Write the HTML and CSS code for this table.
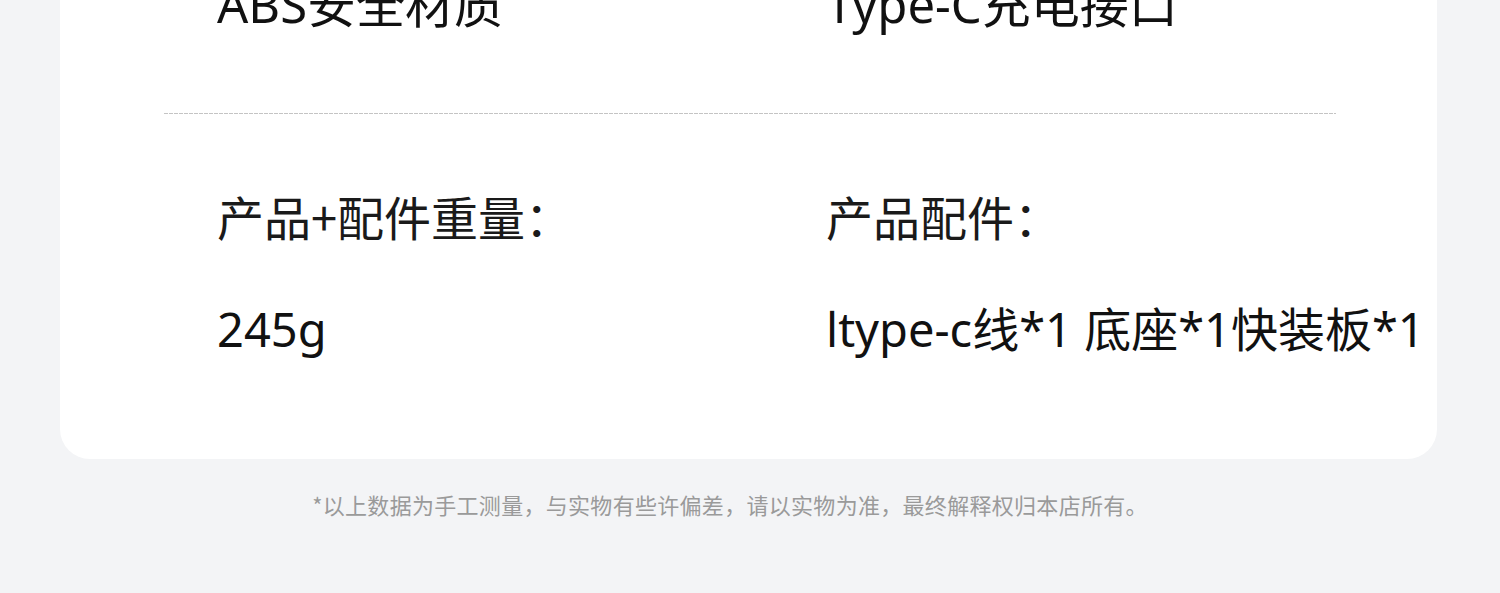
FILE: index.html
```html
<!doctype html>
<html lang="zh-CN">
  <head>
    <meta charset="UTF-8" />
    <meta name="viewport" content="width=device-width, initial-scale=1.0" />
    <title>产品参数</title>
    <link rel="stylesheet" href="styles.css">
  </head>
  <body>
    <div class="page">
      <div class="card">
        <div class="spec-row spec-row--lead">
          <div class="spec">
            <div class="label">产品材质：</div>
            <div class="value">ABS安全材质</div>
          </div>
          <div class="spec">
            <div class="label">充电接口：</div>
            <div class="value">Type-C充电接口</div>
          </div>
        </div>

        <div class="divider"></div>

        <div class="spec-row">
          <div class="spec">
            <div class="label">产品+配件重量：</div>
            <div class="value">245g</div>
          </div>
          <div class="spec">
            <div class="label">产品配件：</div>
            <div class="value">ltype-c线*1 底座*1快装板*1</div>
          </div>
        </div>
      </div>

      <p class="note">*以上数据为手工测量，与实物有些许偏差，请以实物为准，最终解释权归本店所有。</p>
    </div>
  </body>
</html>
```

FILE: styles.css
```css
:root {
  --page-bg: #f3f4f6;
  --card-bg: #ffffff;
  --text: #111111;
  --muted: #9a9a9a;
  --rule: #c4c4c4;
}

* {
  margin: 0;
  padding: 0;
  box-sizing: border-box;
}

body {
  font-family: "Noto Sans CJK SC", "Noto Sans", sans-serif;
  background: var(--page-bg);
  color: var(--text);
  height: 593px;
  overflow: hidden;
}

/* page is scrolled: the top of the card sits above the viewport */
.page {
  margin-top: -134px;
  padding: 0 63px 0 60px;
}

.card {
  background: var(--card-bg);
  border-radius: 0 0 30px 30px;
  padding: 0 101px 106px 104px;
}

.spec-row {
  display: grid;
  grid-template-columns: 609px 1fr;
  padding-left: 53px;
}

.spec {
  display: flex;
  flex-direction: column;
  gap: 67px;
  font-size: 47px;
  line-height: 47px;
  white-space: nowrap;
}

.label {
  color: #1a1a1a;
}

/* latin glyphs in the values run wider than the CJK font's own */
.value {
  font-family: "Noto Sans", "Noto Sans CJK SC", sans-serif;
}

.spec-row--lead .value {
  font-size: 49px;
  line-height: 49px;
}

.divider {
  height: 1px;
  margin: 84px 0 78px;
  background: repeating-linear-gradient(
    90deg,
    var(--rule) 0,
    var(--rule) 4px,
    transparent 4px,
    transparent 5px
  );
}

.note {
  margin-top: 34px;
  padding-right: 37px;
  text-align: center;
  font-size: 22px;
  line-height: 22px;
  letter-spacing: 0.3px;
  color: var(--muted);
}
```
